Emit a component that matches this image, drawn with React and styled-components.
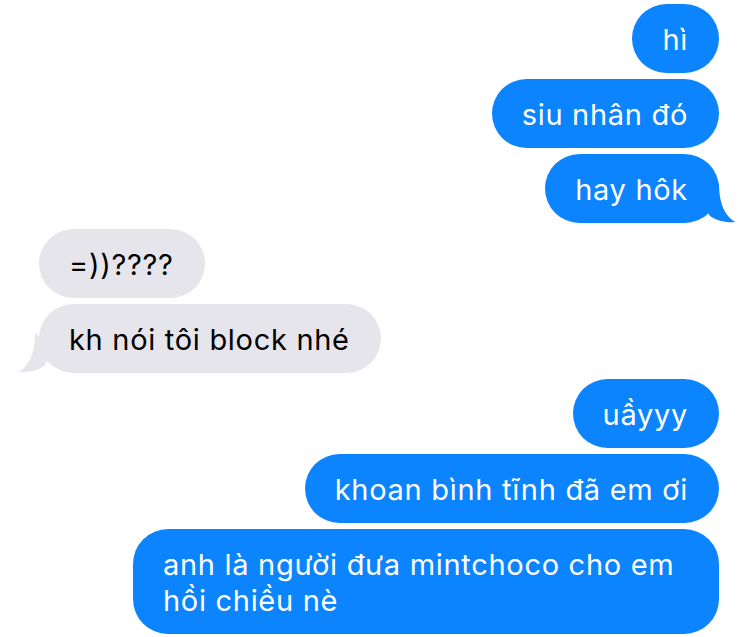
import styled, { createGlobalStyle } from "styled-components";

const GlobalStyle = createGlobalStyle`
  html, body {
    margin: 0;
    padding: 0;
    background: #ffffff;
  }
  body {
    font-family: Inter, "Noto Sans", "Liberation Sans", sans-serif;
    -webkit-font-smoothing: antialiased;
  }
`;

const Thread = styled.div`
  display: flex;
  flex-direction: column;
  gap: 6px;
  width: 750px;
  height: 637px;
  overflow: hidden;
  box-sizing: border-box;
  padding: 4px 31px 0 39px;
`;

const Row = styled.div`
  display: flex;
  justify-content: ${(p) => (p.$sent ? "flex-end" : "flex-start")};
`;

const Bubble = styled.div`
  position: relative;
  box-sizing: border-box;
  max-width: 586px;
  padding: 18px 31px 15px 30px;
  border-radius: 35px;
  font-size: 29px;
  line-height: 36px;
  letter-spacing: 0.7px;
  background: ${(p) => (p.$sent ? "#0b84fe" : "#e6e5eb")};
  color: ${(p) => (p.$sent ? "#ffffff" : "#000000")};
`;

const Tail = styled.svg`
  position: absolute;
  bottom: 0;
  width: 41px;
  height: 40px;
  ${(p) =>
    p.$sent
      ? "right: -17px;"
      : "left: -21px; transform: scaleX(-1);"}
`;

function BubbleTail({ sent }) {
  return (
    <Tail $sent={sent} viewBox="0 0 41 40" aria-hidden="true">
      <path
        d="M24 0 C24 23 31 33 40 39 C32 40 22 38 15 33 L4 15 Z"
        fill={sent ? "#0b84fe" : "#e6e5eb"}
      />
    </Tail>
  );
}

const messages = [
  { text: "hì", sent: true },
  { text: "siu nhân đó", sent: true },
  { text: "hay hôk", sent: true, tail: true },
  { text: "=))????", sent: false },
  { text: "kh nói tôi block nhé", sent: false, tail: true },
  { text: "uầyyy", sent: true },
  { text: "khoan bình tĩnh đã em ơi", sent: true },
  { text: "anh là người đưa mintchoco cho em hồi chiều nè", sent: true },
];

export default function App() {
  return (
    <>
      <GlobalStyle />
      <Thread>
        {messages.map((m, i) => (
          <Row key={i} $sent={m.sent}>
            <Bubble $sent={m.sent}>
              {m.tail && <BubbleTail sent={m.sent} />}
              {m.text}
            </Bubble>
          </Row>
        ))}
      </Thread>
    </>
  );
}
